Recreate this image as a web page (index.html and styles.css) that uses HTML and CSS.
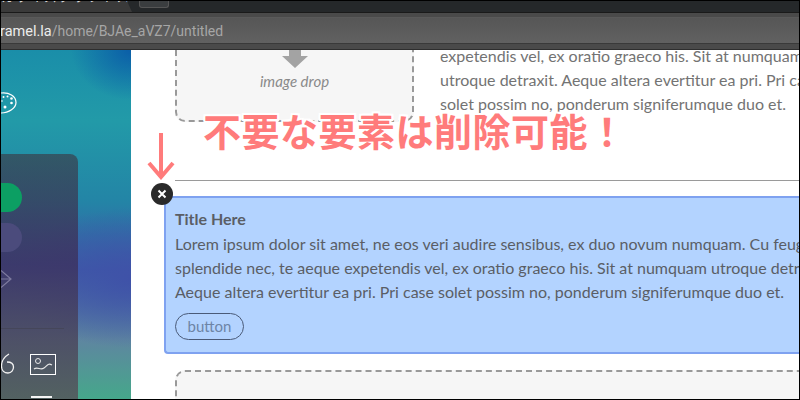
FILE: index.html
```html
<!DOCTYPE html>
<html lang="ja">
<head>
<meta charset="utf-8">
<title>untitled</title>
<link rel="stylesheet" href="styles.css">
</head>
<body>
<div class="frame">
  <div class="tabbar">
    <div class="tab-active"><span class="tab-title">カライズクラフトス</span></div>
    <div class="tab-new"></div>
  </div>
  <div class="addrbar">
    <div class="url"><span class="host">ramel.la</span>/home/BJAe_aVZ7/untitled</div>
  </div>
  <div class="main">
    <aside class="sidebar">
      <svg class="palette" width="16" height="22" viewBox="0 0 16 22">
        <path d="M0 1C8 0 15 4 15 10.500C15 16 8 21 0 21" fill="none" stroke="#fff" stroke-width="1.200"/>
        <g fill="#fff"><circle cx="2.500" cy="5" r="1"/><circle cx="6.500" cy="4.500" r="1"/><circle cx="10.500" cy="6.500" r="1.300"/><circle cx="10.500" cy="11" r="1.300"/><circle cx="4" cy="15" r="1.500"/><circle cx="1" cy="9" r="0.800"/></g>
      </svg>
      <div class="panel">
        <div class="pill pill-green"></div>
        <div class="pill pill-muted"></div>
        <svg class="next" width="12" height="20" viewBox="0 0 12 20"><path d="M0 1.500L10 10L0 18.500M0 10H10" fill="none" stroke="#7d7a9e" stroke-width="1.200"/></svg>
        <div class="panel-rule"></div>
        <div class="tools">
          <svg class="tool-curl" width="14" height="22" viewBox="0 0 14 22"><path d="M8 1C3 4 0.500 8 0.500 13C0.500 17.500 3.500 20 7 20C10.500 20 12.500 17 12.500 14C12.500 11 10 9 6 9" fill="none" stroke="#f2f2f2" stroke-width="1.300"/></svg>
          <svg class="tool-image" width="26" height="21" viewBox="0 0 26 21">
            <rect x="0.500" y="0.500" width="25" height="20" fill="none" stroke="#fff"/>
            <circle cx="8" cy="7" r="2.500" fill="none" stroke="#e8e8e8"/>
            <path d="M4 15C8 12 10 17 14 14S18 9 22 11" fill="none" stroke="#e8e8e8" stroke-width="1.200"/>
          </svg>
        </div>
        <div class="tool-bar"></div>
      </div>
    </aside>
    <section class="canvas">
      <div class="block-top">
        <div class="drop drop-top">
          <svg class="drop-arrow" width="26" height="18" viewBox="0 0 26 18"><path d="M7 0H19V6H26L13 18L0 6H7Z" fill="#a3a3a3"/></svg>
          <div class="drop-label">image drop</div>
        </div>
        <div class="copy">
          <div>expetendis vel, ex oratio graeco his. Sit at numquam</div>
          <div>utroque detraxit. Aeque altera evertitur ea pri. Pri case</div>
          <div>solet possim no, ponderum signiferumque duo et.</div>
        </div>
      </div>
      <hr class="rule">
      <div class="card">
        <div class="card-title">Title Here</div>
        <div class="card-text">Lorem ipsum dolor sit amet, ne eos veri audire sensibus, ex duo novum numquam. Cu feugiat</div>
        <div class="card-text">splendide nec, te aeque expetendis vel, ex oratio graeco his. Sit at numquam utroque detraxit.</div>
        <div class="card-text">Aeque altera evertitur ea pri. Pri case solet possim no, ponderum signiferumque duo et.</div>
        <div class="card-btn">button</div>
      </div>
      <div class="drop drop-bottom"></div>
    </section>
  </div>
  <div class="note">不要な要素は削除可能！</div>
  <svg class="note-arrow" width="28" height="48" viewBox="0 0 28 48"><path d="M14 1V44M2 31L14 45L26 31" fill="none" stroke="#ff7b7b" stroke-width="4"/></svg>
  <div class="close-btn"><svg width="10" height="10" viewBox="0 0 10 10"><path d="M1.500 1.500L8.500 8.500M8.500 1.500L1.500 8.500" stroke="#fff" stroke-width="2"/></svg></div>
</div>
</body>
</html>
```
FILE: styles.css
```css
* { box-sizing: border-box; }
html, body { margin: 0; padding: 0; }
body { width: 800px; height: 400px; overflow: hidden; background: #fff; }

.frame {
  position: relative;
  width: 800px;
  height: 400px;
  border: 1px solid #000;
  overflow: hidden;
  display: flex;
  flex-direction: column;
  font-family: "Lato", "Liberation Sans", "Noto Sans CJK JP", sans-serif;
}

.tabbar {
  flex: none;
  height: 12px;
  background: #25282a;
  display: flex;
  border-bottom: 1px solid #1a1a1a;
}
.tab-active {
  width: 131px;
  height: 11px;
  background: #3a3a3a;
  overflow: hidden;
  clip-path: polygon(0 0, 126px 0, 131px 100%, 0 100%);
}
.tab-title {
  display: block;
  margin-top: -13px;
  font: 13px/16px "Noto Sans CJK JP", sans-serif;
  letter-spacing: 1.500px;
  color: #d8d8d8;
  white-space: nowrap;
}
.tab-new {
  width: 30px;
  height: 7px;
  margin-left: 7px;
  background: #3a3d3f;
  border: 1px solid #555;
  border-top: 0;
  border-radius: 0 0 3px 3px;
}

.addrbar {
  flex: none;
  height: 37px;
  padding-top: 4px;
  background: #4a4a4a;
  border-bottom: 1px solid #2e2e2e;
}
.url {
  height: 27px;
  border-top: 1px solid #5a5a5a;
  border-bottom: 1px solid #3a3a3a;
  background: linear-gradient(#565656, #616161);
  font-family: "Roboto", sans-serif;
  font-size: 14px;
  line-height: 26px;
  color: #a6a6a6;
  white-space: nowrap;
  margin-left: -1px;
}
.host { color: #ececec; font-size: 14.500px; }

.main {
  flex: 1;
  min-height: 0;
  display: flex;
}

.sidebar {
  flex: none;
  width: 130px;
  display: flex;
  flex-direction: column;
  background:
    radial-gradient(60px 50px at 100% 0, #0b5ea8 0%, rgba(11, 94, 168, 0) 100%),
    radial-gradient(120px 70px at 100% 228px, #3f52a8 0%, rgba(63, 82, 168, 0) 100%),
    linear-gradient(180deg, #1a8ea9 0, #229aa8 70px, #2385a6 150px, #3d5aa8 220px, #5e86a0 290px, #45a88a 350px);
}
.palette { margin-top: 42px; flex: none; }
.panel {
  margin-top: 40px;
  width: 77px;
  flex: 1;
  min-height: 0;
  border-radius: 0 8px 0 0;
  background: linear-gradient(180deg, rgba(60, 50, 60, 0.6), rgba(60, 50, 95, 0.82) 45%, rgba(85, 85, 90, 0.85) 100%);
  padding-top: 29px;
  overflow: hidden;
  display: flex;
  flex-direction: column;
}
.pill {
  flex: none;
  width: 21px;
  height: 29px;
  border-radius: 0 15px 15px 0;
}
.pill-green { background: #0c9f63; }
.pill-muted { margin-top: 11px; background: #4b4b7c; }
.next { margin-top: 17px; flex: none; }
.panel-rule {
  flex: none;
  width: 63px;
  height: 1px;
  margin-top: 39px;
  background: #45465a;
}
.tools {
  flex: none;
  display: flex;
  align-items: flex-start;
  gap: 15px;
  margin-top: 25px;
}
.tool-curl { margin-top: -1px; }
.tool-bar {
  flex: none;
  width: 21px;
  height: 2px;
  margin: 21px 0 0 30px;
  background: #f4f4f4;
}

.canvas {
  flex: 1;
  min-width: 0;
  background: #fff;
  padding-left: 33px;
  overflow: hidden;
  display: flex;
  flex-direction: column;
}
.block-top {
  flex: none;
  display: flex;
  height: 180px;
  margin-top: -50px;
}
.drop {
  border: 2px dashed #999;
  background: #f6f6f6;
  border-radius: 10px;
}
.drop-top {
  flex: none;
  width: 239px;
  height: 122px;
  display: flex;
  flex-direction: column;
  align-items: center;
  padding-top: 48px;
  margin-left: 11px;
}
.drop-arrow { flex: none; }
.drop-label {
  margin-top: 4px;
  font-style: italic;
  font-size: 15px;
  line-height: 18px;
  color: #8a8a8a;
}
.copy {
  margin: 44px 0 0 26px;
  font-size: 16px;
  line-height: 24px;
  color: #737373;
  white-space: nowrap;
}
.rule {
  flex: none;
  height: 1px;
  margin: 0 0 0 11px;
  border: 0;
  background: #9a9a9a;
}
.card {
  flex: none;
  height: 158px;
  margin-top: 15px;
  padding: 11px 0 0 9px;
  border: 2px solid #7fa2f0;
  border-right: 0;
  border-radius: 4px 0 0 4px;
  background: #b3d3ff;
  white-space: nowrap;
  overflow: hidden;
}
.card-title {
  font-size: 16px;
  font-weight: 700;
  line-height: 20px;
  color: #5a5e66;
}
.card-text {
  font-size: 16px;
  line-height: 24px;
  color: #5a5e66;
}
.card-title + .card-text { margin-top: 3px; }
.card-btn {
  width: 69px;
  height: 27px;
  margin-top: 9px;
  border: 1px solid #4a5a78;
  border-radius: 14px;
  text-align: center;
  font-size: 15px;
  line-height: 25px;
  color: #6d84a6;
}
.drop-bottom {
  flex: none;
  height: 60px;
  margin: 16px -10px 0 11px;
}

.note {
  position: absolute;
  left: 202px;
  top: 106px;
  font: 700 38px/46px "Noto Sans CJK JP", sans-serif;
  letter-spacing: 0.500px;
  color: #ff7b7b;
  white-space: nowrap;
  text-shadow: 2px 0 0 #fff, -2px 0 0 #fff, 0 2px 0 #fff, 0 -2px 0 #fff, 2px 2px 0 #fff, -2px -2px 0 #fff, 2px -2px 0 #fff, -2px 2px 0 #fff;
}
.note-arrow { position: absolute; left: 146px; top: 131px; }
.close-btn {
  position: absolute;
  left: 150px;
  top: 182px;
  width: 22px;
  height: 22px;
  border-radius: 50%;
  background: #2a2a2a;
  display: flex;
  align-items: center;
  justify-content: center;
}
.close-btn svg { display: block; }
```
